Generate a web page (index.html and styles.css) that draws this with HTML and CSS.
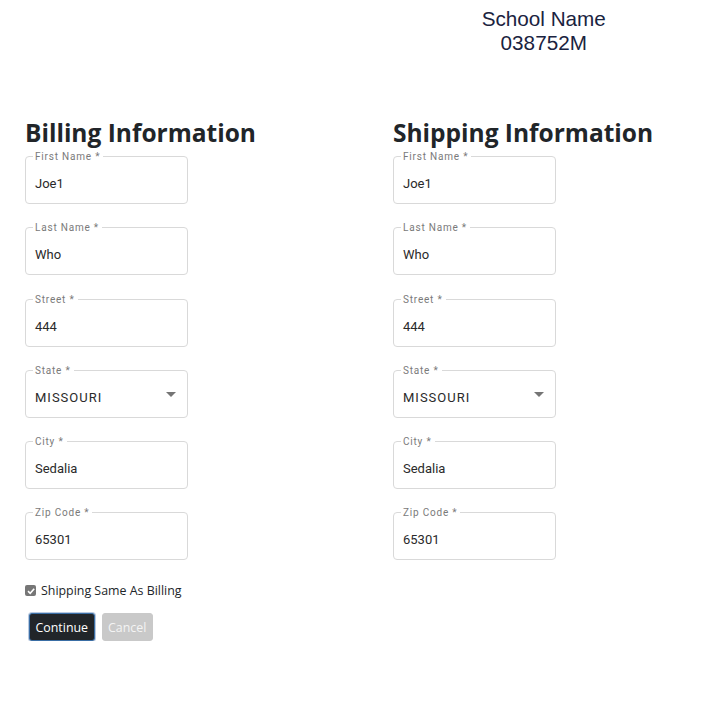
FILE: index.html
```html
<!DOCTYPE html>
<html>
<head>
<meta charset="utf-8">
<link rel="stylesheet" href="styles.css">
</head>
<body>
<header class="top">
  <div class="top-left"></div>
  <div class="school">
    <div>School Name</div>
    <div>038752M</div>
  </div>
</header>
<main class="forms">
  <section class="col">
    <h2 class="title">Billing Information</h2>
    <div class="fields">
      <div class="field"><span class="label">First Name *</span><span class="value">Joe1</span></div>
      <div class="field"><span class="label">Last Name *</span><span class="value">Who</span></div>
      <div class="field"><span class="label">Street *</span><span class="value">444</span></div>
      <div class="field select"><span class="label">State *</span><span class="value caps">MISSOURI</span><span class="arrow"></span></div>
      <div class="field"><span class="label">City *</span><span class="value">Sedalia</span></div>
      <div class="field"><span class="label">Zip Code *</span><span class="value">65301</span></div>
    </div>
  </section>
  <section class="col">
    <h2 class="title">Shipping Information</h2>
    <div class="fields">
      <div class="field"><span class="label">First Name *</span><span class="value">Joe1</span></div>
      <div class="field"><span class="label">Last Name *</span><span class="value">Who</span></div>
      <div class="field"><span class="label">Street *</span><span class="value">444</span></div>
      <div class="field select"><span class="label">State *</span><span class="value caps">MISSOURI</span><span class="arrow"></span></div>
      <div class="field"><span class="label">City *</span><span class="value">Sedalia</span></div>
      <div class="field"><span class="label">Zip Code *</span><span class="value">65301</span></div>
    </div>
  </section>
</main>
<div class="bottom">
  <label class="check"><span class="box"><svg width="10" height="10" viewBox="0 0 10 10"><path d="M2 5.2 L4.2 7.3 L8.2 2.8" fill="none" stroke="#fff" stroke-width="1.6"/></svg></span>Shipping Same As Billing</label>
  <div class="buttons">
    <button class="btn primary">Continue</button>
    <button class="btn disabled">Cancel</button>
  </div>
</div>
</body>
</html>
```
FILE: styles.css
```css
* { box-sizing: border-box; }
body {
  margin: 0;
  background: #fff;
  font-family: "Open Sans", "Noto Sans", sans-serif;
  color: #212529;
}
.top {
  display: grid;
  grid-template-columns: 1fr 1fr;
  height: 110px;
}
.school {
  text-align: center;
  font-family: "Liberation Sans", Arial, sans-serif;
  font-size: 20.7px;
  line-height: 24px;
  color: #1a2340;
  padding-top: 7px;
}
.forms {
  display: grid;
  grid-template-columns: 368px 368px;
  padding-left: 25px;
}
.title {
  margin: 0;
  font-size: 24.5px;
  font-weight: 700;
  line-height: 46px;
  color: #212529;
  letter-spacing: 0;
}
.fields {
  display: flex;
  flex-direction: column;
  gap: 23.25px;
}
.field {
  position: relative;
  width: 163px;
  height: 48px;
  border: 1px solid #d9d9d9;
  border-radius: 4px;
  display: flex;
  align-items: center;
  padding: 7px 9px 0;
  font-family: Roboto, sans-serif;
}
.label {
  position: absolute;
  top: -6px;
  left: 7px;
  padding: 0 3px 0 2px;
  background: #fff;
  font-size: 10px;
  line-height: 12px;
  letter-spacing: 0.8px;
  color: #7a7a7a;
}
.value {
  font-size: 13px;
  color: #2a2a2a;
}
.caps { letter-spacing: 1px; }
.arrow {
  position: absolute;
  right: 11px;
  top: 21px;
  width: 0;
  height: 0;
  border-left: 5px solid transparent;
  border-right: 5px solid transparent;
  border-top: 5px solid #757575;
}
.bottom {
  padding: 22px 0 0 25px;
}
.check {
  display: flex;
  align-items: center;
  gap: 5px;
  font-size: 12.4px;
  color: #212529;
}
.box {
  width: 11px;
  height: 11px;
  background: #767676;
  border-radius: 2px;
  display: flex;
  align-items: center;
  justify-content: center;
}
.buttons {
  display: flex;
  gap: 7px;
  padding: 14px 0 0 4px;
}
.btn {
  font-family: "Open Sans", "Noto Sans", sans-serif;
  font-size: 12.4px;
  height: 28px;
  padding: 0 5.5px;
  border-radius: 3px;
  border: 1px solid transparent;
}
.primary {
  background: #212529;
  color: #fff;
  border-color: #3a6ea5;
  box-shadow: 0 0 0 1px #b8c9e0;
}
.disabled {
  background: #c9c9c9;
  color: #f4f4f4;
  border-color: #c9c9c9;
}
```
